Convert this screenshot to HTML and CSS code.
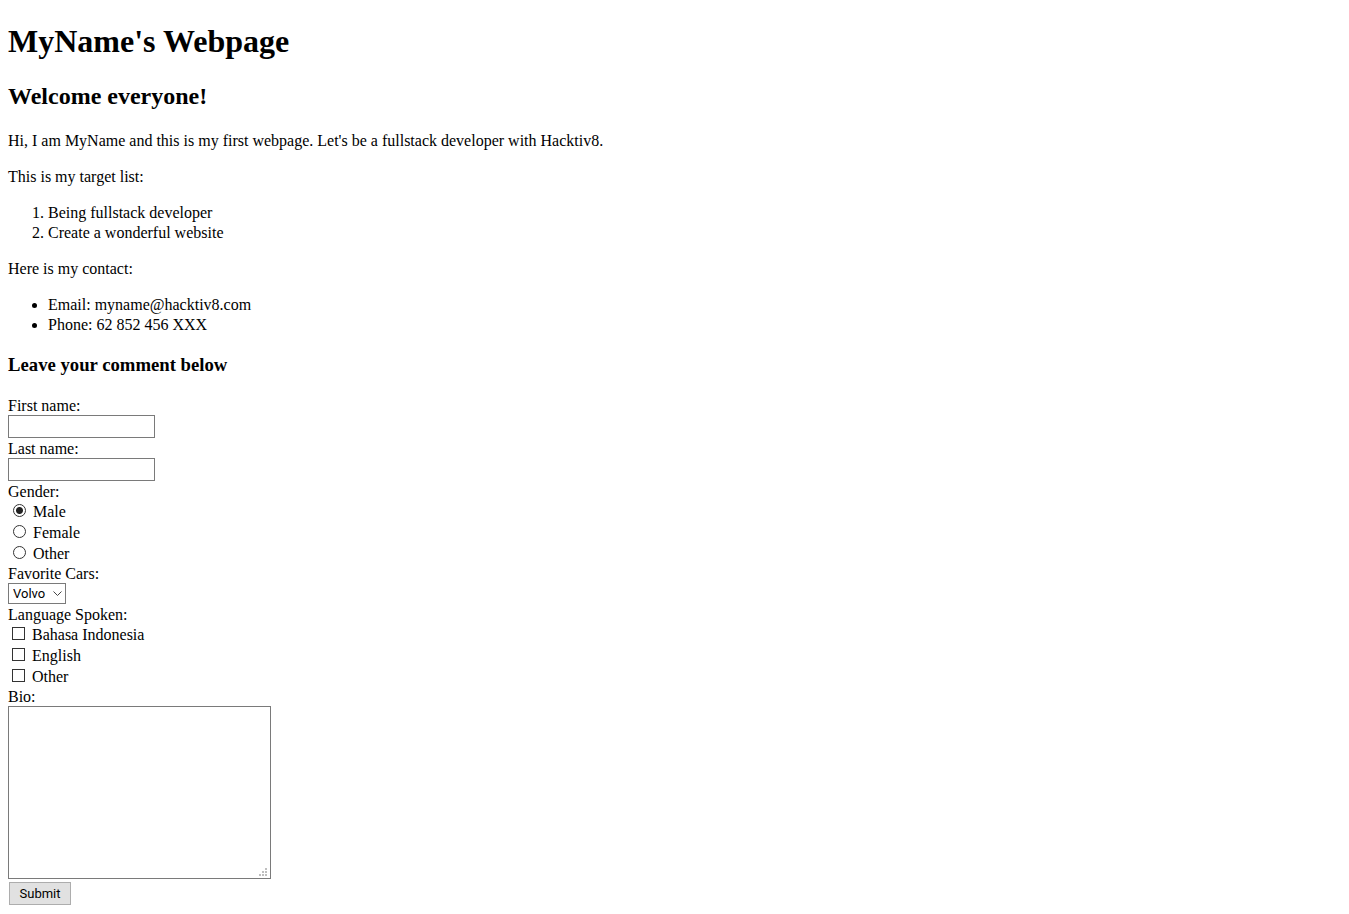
FILE: index.html
```
<!DOCTYPE html>
<html lang="en">
<head>
<meta charset="utf-8">
<title>MyName's Webpage</title>
<link rel="stylesheet" href="styles.css">
</head>
<body class="page">
<h1 class="title">MyName's Webpage</h1>
<h2 class="subtitle">Welcome everyone!</h2>
<p class="text">Hi, I am MyName and this is my first webpage. Let's be a fullstack developer with Hacktiv8.</p>
<p class="text">This is my target list:</p>
<ol class="list">
<li>Being fullstack developer</li>
<li>Create a wonderful website</li>
</ol>
<p class="text">Here is my contact:</p>
<ul class="list">
<li>Email: myname@hacktiv8.com</li>
<li>Phone: 62 852 456 XXX</li>
</ul>
<h3 class="heading">Leave your comment below</h3>
<form class="form">
<label class="label" for="first">First name:</label>
<input class="field" type="text" id="first">
<label class="label" for="last">Last name:</label>
<input class="field" type="text" id="last">
<div class="label" id="gender">Gender:</div>
<div class="options" role="radiogroup" aria-labelledby="gender">
<label class="option"><input class="radio" type="radio" name="gender" checked>Male</label>
<label class="option"><input class="radio" type="radio" name="gender">Female</label>
<label class="option"><input class="radio" type="radio" name="gender">Other</label>
</div>
<label class="label" for="cars">Favorite Cars:</label>
<div class="picker">
<select class="select" id="cars"><option>Volvo</option></select>
<svg class="arrow" width="9" height="6" viewBox="0 0 9 6" aria-hidden="true"><path d="M.5 .5 4.5 4.5 8.5 .5" fill="none" stroke="#444"/></svg>
</div>
<div class="label" id="lang">Language Spoken:</div>
<div class="options" role="group" aria-labelledby="lang">
<label class="option"><input class="check" type="checkbox">Bahasa Indonesia</label>
<label class="option"><input class="check" type="checkbox">English</label>
<label class="option"><input class="check" type="checkbox">Other</label>
</div>
<label class="label" for="bio">Bio:</label>
<div class="bio-wrap">
<textarea class="bio" id="bio"></textarea>
<svg class="grip" width="8" height="8" viewBox="0 0 8 8" aria-hidden="true"><path d="M6 0h2v2h-2zM3 3h2v2h-2zM6 3h2v2h-2zM0 6h2v2h-2zM3 6h2v2h-2zM6 6h2v2h-2z" fill="#bfbfbf"/></svg>
</div>
<button class="submit" type="button">Submit</button>
</form>
</body>
</html>
```
FILE: styles.css
```
.page {
  margin: 0;
  padding: 0 8px;
  background: #fff;
  color: #000;
  font: 16px/20px "Liberation Serif", "Times New Roman", serif;
}
.title { margin: 22px 0; font-size: 32px; line-height: 38px; }
.subtitle { margin: 20px 0; font-size: 24px; line-height: 29px; }
.text { margin: 16px 0; }
.list { margin: 16px 0; padding-left: 40px; }
.heading { margin: 19px 0; line-height: 22px; }
.form { display: flex; flex-direction: column; align-items: flex-start; }
.label { display: block; padding-top: 2px; line-height: 18px; }
.field, .bio {
  box-sizing: border-box;
  border: 1px solid #7a7a7a;
  background: #fff;
  font: 13px/17px Roboto, sans-serif;
}
.field { width: 147px; height: 23px; margin: 0; padding: 2px; }
.options { display: flex; flex-direction: column; gap: 1px; }
.option { display: flex; align-items: flex-start; padding-top: 2px; line-height: 18px; }
.radio, .check {
  box-sizing: border-box;
  appearance: none;
  width: 13px;
  height: 13px;
  border: 1px solid #333;
  background: #fff;
}
.radio { margin: 1px 7px 0 5px; border-radius: 50%; }
.radio:checked { background: radial-gradient(circle, #222 3px, #fff 4px); }
.check { margin: 1px 7px 0 4px; }
.picker { position: relative; display: flex; }
.select {
  box-sizing: border-box;
  appearance: none;
  width: 58px;
  height: 21px;
  margin: 0;
  padding: 0 4px;
  border: 1px solid #7a7a7a;
  border-radius: 0;
  background: #fff;
  color: #000;
  font: 13px/19px Roboto, sans-serif;
}
.arrow { position: absolute; right: 4px; top: 8px; pointer-events: none; }
.bio-wrap { position: relative; display: flex; }
.bio { width: 263px; height: 173px; margin: 0; padding: 2px; resize: none; }
.grip { position: absolute; right: 4px; bottom: 3px; pointer-events: none; }
.submit {
  box-sizing: border-box;
  width: 62px;
  height: 23px;
  margin: 3px 1px;
  padding: 0;
  border: 1px solid #adadad;
  background: #e1e1e1;
  color: #000;
  font: 13px/21px Roboto, sans-serif;
}
```
